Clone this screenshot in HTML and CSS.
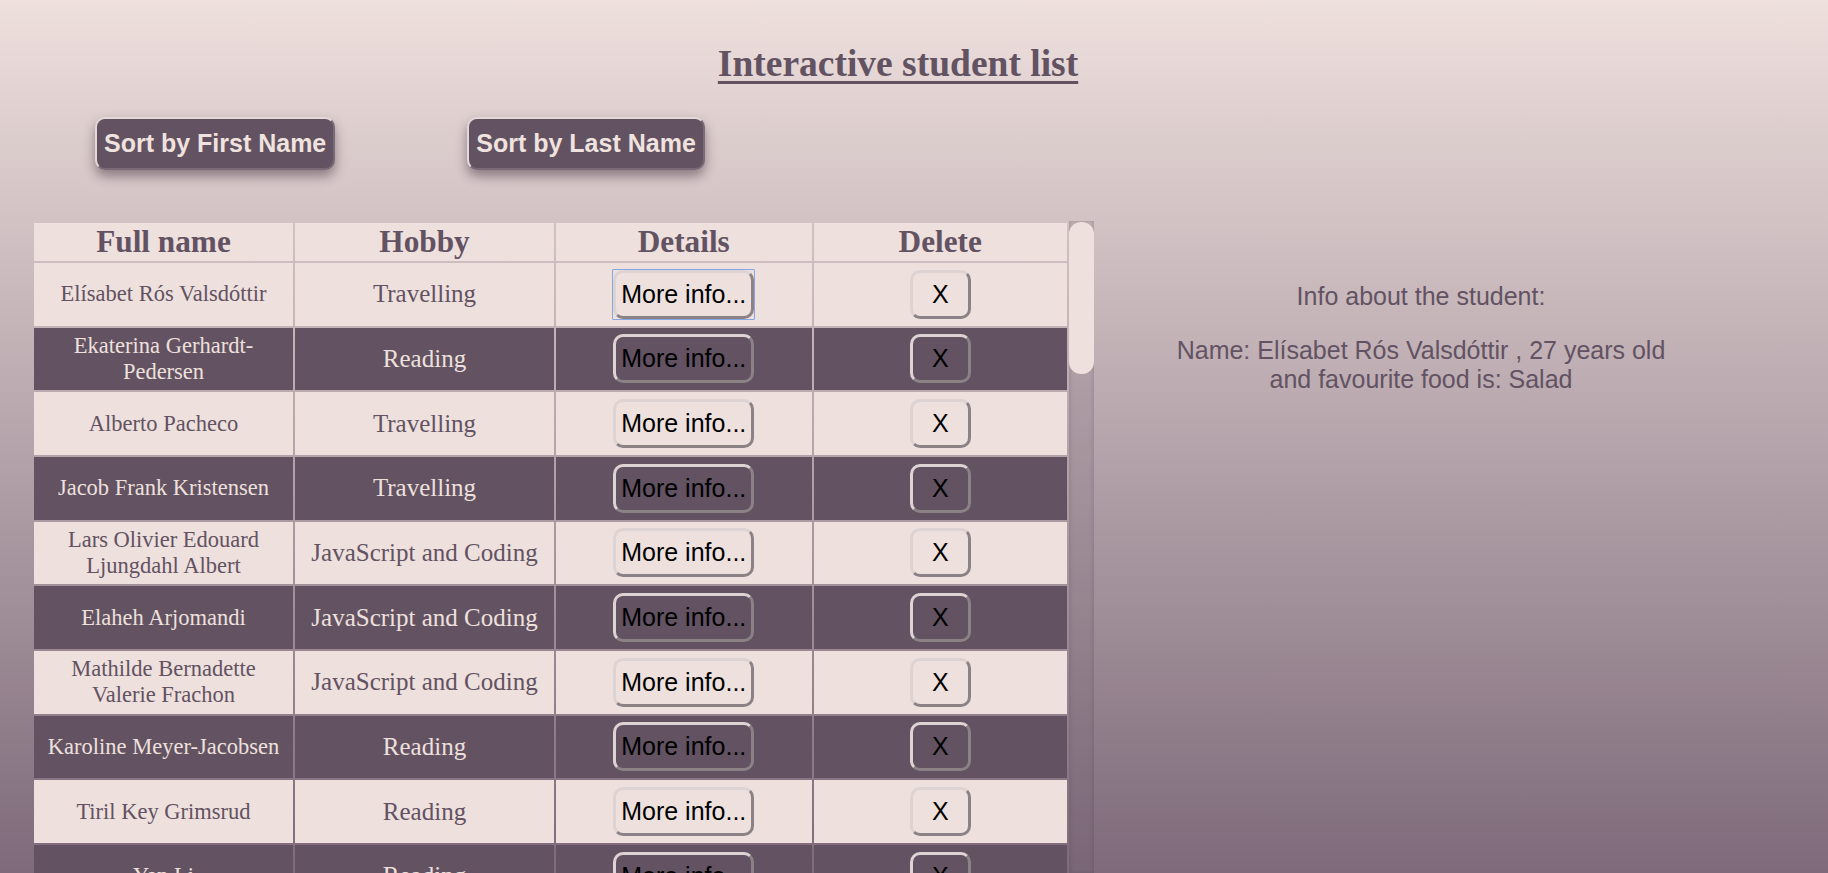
FILE: index.html
```html
<!DOCTYPE html>
<html lang="en">
<head>
<meta charset="utf-8">
<title>Interactive student list</title>
<link rel="stylesheet" href="styles.css">
</head>
<body>
<h1 class="title">Interactive student list</h1>
<div class="controls">
  <button class="sort-btn">Sort by First Name</button>
  <button class="sort-btn">Sort by Last Name</button>
</div>
<div class="main">
  <div class="table-wrap">
    <div class="table-scroll">
      <table class="students">
        <thead>
          <tr><th class="c1">Full name</th><th class="c2">Hobby</th><th class="c3">Details</th><th class="c4">Delete</th></tr>
        </thead>
        <tbody>
          <tr><td class="name">Elísabet Rós Valsdóttir</td><td class="hobby">Travelling</td><td><button class="more focused">More info...</button></td><td><button class="del">X</button></td></tr>
          <tr><td class="name">Ekaterina Gerhardt-Pedersen</td><td class="hobby">Reading</td><td><button class="more">More info...</button></td><td><button class="del">X</button></td></tr>
          <tr><td class="name">Alberto Pacheco</td><td class="hobby">Travelling</td><td><button class="more">More info...</button></td><td><button class="del">X</button></td></tr>
          <tr><td class="name">Jacob Frank Kristensen</td><td class="hobby">Travelling</td><td><button class="more">More info...</button></td><td><button class="del">X</button></td></tr>
          <tr><td class="name">Lars Olivier Edouard Ljungdahl Albert</td><td class="hobby">JavaScript and Coding</td><td><button class="more">More info...</button></td><td><button class="del">X</button></td></tr>
          <tr><td class="name">Elaheh Arjomandi</td><td class="hobby">JavaScript and Coding</td><td><button class="more">More info...</button></td><td><button class="del">X</button></td></tr>
          <tr><td class="name">Mathilde Bernadette Valerie Frachon</td><td class="hobby">JavaScript and Coding</td><td><button class="more">More info...</button></td><td><button class="del">X</button></td></tr>
          <tr><td class="name">Karoline Meyer-Jacobsen</td><td class="hobby">Reading</td><td><button class="more">More info...</button></td><td><button class="del">X</button></td></tr>
          <tr><td class="name">Tiril Key Grimsrud</td><td class="hobby">Reading</td><td><button class="more">More info...</button></td><td><button class="del">X</button></td></tr>
          <tr><td class="name">Yan Li</td><td class="hobby">Reading</td><td><button class="more">More info...</button></td><td><button class="del">X</button></td></tr>
          <tr><td class="name">Anna Nowak</td><td class="hobby">Travelling</td><td><button class="more">More info...</button></td><td><button class="del">X</button></td></tr>
          <tr><td class="name">Mikkel Holm</td><td class="hobby">Reading</td><td><button class="more">More info...</button></td><td><button class="del">X</button></td></tr>
          <tr><td class="name">Sofie Lund</td><td class="hobby">JavaScript and Coding</td><td><button class="more">More info...</button></td><td><button class="del">X</button></td></tr>
          <tr><td class="name">Jonas Berg</td><td class="hobby">Travelling</td><td><button class="more">More info...</button></td><td><button class="del">X</button></td></tr>
          <tr><td class="name">Ida Marie Dahl</td><td class="hobby">Reading</td><td><button class="more">More info...</button></td><td><button class="del">X</button></td></tr>
          <tr><td class="name">Oliver Strand</td><td class="hobby">JavaScript and Coding</td><td><button class="more">More info...</button></td><td><button class="del">X</button></td></tr>
          <tr><td class="name">Emma Sørensen</td><td class="hobby">Travelling</td><td><button class="more">More info...</button></td><td><button class="del">X</button></td></tr>
          <tr><td class="name">Lucas Martin</td><td class="hobby">Reading</td><td><button class="more">More info...</button></td><td><button class="del">X</button></td></tr>
          <tr><td class="name">Freja Nielsen</td><td class="hobby">JavaScript and Coding</td><td><button class="more">More info...</button></td><td><button class="del">X</button></td></tr>
          <tr><td class="name">Noah Jensen</td><td class="hobby">Travelling</td><td><button class="more">More info...</button></td><td><button class="del">X</button></td></tr>
        </tbody>
      </table>
    </div>
    <div class="scrollbar">
      <div class="thumb"></div>
    </div>
  </div>
  <div class="info">
    <p>Info about the student:</p>
    <p>Name: Elísabet Rós Valsdóttir , 27 years old and favourite food is: Salad</p>
  </div>
</div>
</body>
</html>
```
FILE: styles.css
```css
html, body {
  margin: 0;
  padding: 0;
}

body {
  height: 873px;
  overflow: hidden;
  background: linear-gradient(to bottom, #eee0dd 0%, #7e6a7a 100%);
  color: #625262;
  font-family: "Liberation Serif", "Times New Roman", serif;
}

.title {
  margin: 43px 32px 0 0;
  text-align: center;
  font-family: "Liberation Serif", "Times New Roman", serif;
  font-weight: bold;
  font-size: 37.5px;
  line-height: 42px;
  color: #625262;
  text-decoration: underline;
  text-underline-offset: 5px;
  text-decoration-thickness: 3px;
}

.controls {
  display: flex;
  gap: 132px;
  margin-top: 32px;
  padding-left: 95px;
}

.sort-btn {
  box-sizing: border-box;
  height: 53px;
  padding: 0 7px;
  font-family: "Liberation Sans", Arial, sans-serif;
  font-weight: bold;
  font-size: 25px;
  color: #f0e2df;
  background: #625262;
  border: 2px solid;
  border-color: #e2d9d8 #7a6a78 #7a6a78 #e2d9d8;
  border-radius: 10px;
  box-shadow: 0 6px 12px rgba(40, 25, 40, 0.45);
  cursor: pointer;
}

.main {
  display: flex;
  margin-top: 51px;
}

.table-wrap {
  display: flex;
  margin-left: 32px;
  height: 652px;
  flex: none;
}

.table-scroll {
  width: 1037px;
  height: 100%;
  overflow-y: auto;
  scrollbar-width: none;
}

.table-scroll::-webkit-scrollbar {
  display: none;
}

.scrollbar {
  width: 25px;
  height: 100%;
  background: rgba(98, 82, 98, 0.16);
  box-shadow: inset 2px 0 3px rgba(60, 40, 60, 0.1), inset -2px 0 3px rgba(60, 40, 60, 0.1);
}

.thumb {
  height: 152px;
  margin-top: 1px;
  background: #eee0dd;
  border-radius: 12px;
}

.students {
  border-collapse: separate;
  border-spacing: 2px;
  width: 1037px;
  table-layout: fixed;
}

.students .c1 { width: 257px; }
.students .c2 { width: 257px; }
.students .c3 { width: 253.5px; }
.students .c4 { width: 251.5px; }

.students th {
  background: #eee0dd;
  color: #625262;
  font-size: 31.25px;
  font-weight: bold;
  padding: 1px;
  text-align: center;
}

.students td {
  height: 62.67px;
  padding: 0 1px;
  text-align: center;
  vertical-align: middle;
  background: #eee0dd;
  color: #625262;
}

.students td.name {
  font-size: 22.5px;
  padding: 0 5px;
}

.students td.hobby {
  font-size: 25px;
}

.students tbody tr:nth-child(even) td {
  background: #625262;
  color: #eee0dd;
}

.more, .del {
  position: relative;
  box-sizing: border-box;
  height: 49px;
  font-family: "Liberation Sans", Arial, sans-serif;
  font-size: 25px;
  color: #000;
  background: transparent;
  border: 3px solid;
  border-color: #ddd3d2 #8a8284 #8a8284 #ddd3d2;
  border-radius: 10px;
  cursor: pointer;
  vertical-align: middle;
}

.more {
  width: 141px;
  padding: 0 4px;
}

.del {
  width: 61px;
  padding: 0;
}

.focused::after {
  content: "";
  position: absolute;
  inset: -4px;
  border: 1.5px solid #86a8e2;
  border-radius: 1px;
  pointer-events: none;
}

.info {
  width: 510px;
  margin-left: 72px;
  padding-top: 36px;
  text-align: center;
  font-family: "Liberation Sans", Arial, sans-serif;
  font-size: 25px;
  color: #625262;
}

.info p {
  margin: 25px 0 0 0;
}
```
